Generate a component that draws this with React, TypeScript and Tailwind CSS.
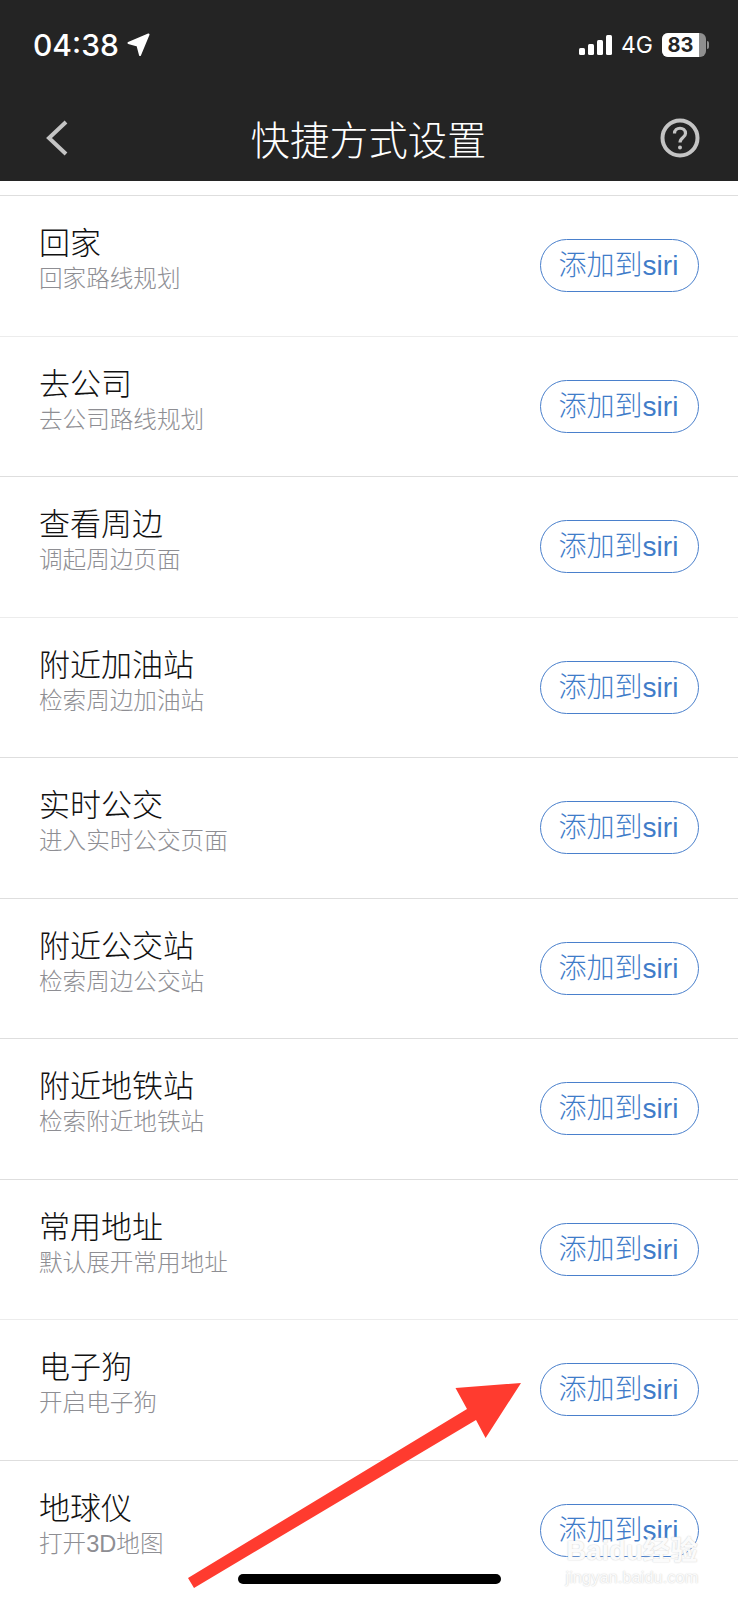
const items = [
  ['回家', '回家路线规划', true],
  ['去公司', '去公司路线规划', false],
  ['查看周边', '调起周边页面', true],
  ['附近加油站', '检索周边加油站', false],
  ['实时公交', '进入实时公交页面', true],
  ['附近公交站', '检索周边公交站', true],
  ['附近地铁站', '检索附近地铁站', true],
  ['常用地址', '默认展开常用地址', true],
  ['电子狗', '开启电子狗', false],
  ['地球仪', '打开3D地图', true],
] as const;

const cjk = "font-['Liberation_Sans','Noto_Sans_CJK_SC',sans-serif]";

function Row({ title, sub, strong }: { title: string; sub: string; strong: boolean }) {
  return (
    <div className={`flex h-[140.55px] items-start justify-between border-t pl-[39px] pr-[39px] ${strong ? 'border-[#dedede]' : 'border-[#ececec]'}`}>
      <div className="flex flex-col pt-[30px]">
        <span className="text-[31px] leading-[36px] font-light text-[#111]">{title}</span>
        <span className="mt-[3px] text-[23.6px] leading-[28px] font-light text-[#8e8e93]">{sub}</span>
      </div>
      <button className="mt-[43px] flex h-[53px] w-[159px] items-center justify-center rounded-full border-[1.5px] border-[#4a80cc] pt-[1px] pr-[2px] text-[28px] font-light text-[#3f7cc9]">
        添加到siri
      </button>
    </div>
  );
}

export default function App() {
  return (
    <div className={`relative h-[1600px] w-[738px] overflow-hidden bg-white ${cjk}`}>
      <header className="flex h-[181px] flex-col bg-[#242424] text-white">
        <div className="flex items-center justify-between pl-[33px] pr-[29px] pt-[33px]">
          <div className="flex items-center gap-[8px]">
            <span className="font-['Inter',sans-serif] text-[30px] leading-[24px] font-medium">04:38</span>
            <svg width="23" height="24" viewBox="0 0 23 24" fill="white" stroke="white" strokeWidth="2" strokeLinejoin="round">
              <path d="M21.5 1.5 L13 22 L10.5 12.5 L1.5 10 Z" />
            </svg>
          </div>
          <div className="flex items-center">
            <div className="flex items-end gap-[3px]">
              <i className="h-[7px] w-[6px] rounded-[1.5px] bg-white" />
              <i className="h-[11px] w-[6px] rounded-[1.5px] bg-white" />
              <i className="h-[15px] w-[6px] rounded-[1.5px] bg-white" />
              <i className="h-[20px] w-[6px] rounded-[1.5px] bg-white" />
            </div>
            <span className="ml-[9px] font-['Inter',sans-serif] text-[23px] leading-[24px]">4G</span>
            <div className="ml-[9px] flex h-[24px] w-[44px] overflow-hidden rounded-[6px] bg-[#8f8f8f]">
              <div className="flex w-[37px] items-center justify-center bg-white font-['Inter',sans-serif] text-[20px] leading-[24px] font-bold text-[#242424]">
                83
              </div>
            </div>
            <i className="ml-[1px] h-[8px] w-[2px] rounded-r-full bg-[#8f8f8f]" />
          </div>
        </div>
        <div className="mt-[56px] flex items-center justify-between pl-[45px] pr-[38px]">
          <svg width="24" height="36" viewBox="0 0 24 36" fill="none" stroke="#c4c4c4" strokeWidth="4">
            <path d="M21 2 L4 18 L21 34" />
          </svg>
          <h1 className="ml-[8px] mt-[6px] text-[39.3px] leading-[44px] font-light">快捷方式设置</h1>
          <svg width="40" height="40" viewBox="0 0 40 40" fill="none" stroke="#c4c4c4">
            <circle cx="20" cy="20" r="17.5" strokeWidth="4" />
            <path d="M14.5 15.5 C14.5 8.5 25.5 8.5 25.5 15.5 C25.5 19.5 20 19.5 20 24.5" strokeWidth="3.2" />
            <circle cx="20" cy="29.5" r="2" fill="#c4c4c4" stroke="none" />
          </svg>
        </div>
      </header>

      <div className="pt-[14px]">
        {items.map(([title, sub, strong]) => (
          <Row key={title} title={title} sub={sub} strong={strong} />
        ))}
      </div>

      {/* watermark */}
      <div className="absolute left-[566px] top-[1535px] flex w-[132px] flex-col items-center text-[#fbfbfb] [text-shadow:0_0_1.5px_#c4c4c4]">
        <span className="whitespace-nowrap text-[27.5px] leading-[32px] font-bold">Baidu经验</span>
        <span className="whitespace-nowrap text-[16.5px] leading-[20px]">jingyan.baidu.com</span>
      </div>

      {/* red arrow annotation */}
      <svg className="absolute left-0 top-0" width="738" height="1600" fill="#ff3b2f">
        <path d="M521 1383 L455.5 1388 L467 1409 L188 1578 L194 1588 L476 1420 L485.6 1438 Z" />
      </svg>

      <div className="absolute left-[238px] top-[1574px] h-[10px] w-[263px] rounded-full bg-black" />
    </div>
  );
}
